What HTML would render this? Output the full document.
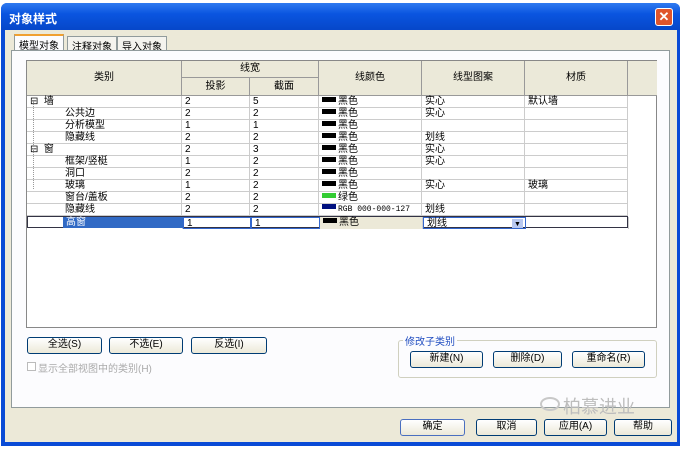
<!DOCTYPE html>
<html><head><meta charset="utf-8"><style>
*{margin:0;padding:0;box-sizing:border-box}
body{width:683px;height:450px;background:#fff;position:relative;overflow:hidden;font-family:"Liberation Sans","Noto Sans CJK SC",sans-serif;font-size:10px;color:#000}
.a{position:absolute}
.win{left:1px;top:3px;width:679px;height:443px;background:#0a4bd6;border-radius:6px 6px 0 0}
.title{left:1px;top:3px;width:679px;height:27px;background:linear-gradient(#2f7af0,#0a55e0 40%,#0647c9);border-radius:6px 6px 0 0;color:#fff;font-weight:bold;font-size:12px;padding:7px 8px}
.body{left:5px;top:30px;width:672px;height:412px;background:#ece9d8}
.close{left:655px;top:8px;width:18px;height:18px;background:#e0552c;border:1px solid #fff;border-radius:3px;color:#fff;font-size:13px;text-align:center;line-height:15px;font-weight:bold}
.tab{top:36px;height:15px;border:1px solid #919b9c;border-bottom:none;background:#f4f3ee;font-size:10px;padding:1px 4px}
.panel{left:11px;top:50px;width:659px;height:358px;background:#fcfcfe;border:1px solid #919b9c}
.grid{left:26px;top:60px;width:631px;height:268px;background:#fff;border:1px solid #888}
.hd{background:#ebe9d9;border-right:1px solid #999;border-bottom:1px solid #999;text-align:center;font-size:10px}
.row{position:absolute;left:0;height:12px;border-bottom:1px solid #ccc;width:601px}
.c{position:absolute;top:0;height:12px;border-right:1px solid #ccc;font-size:10px;line-height:11px;padding-left:3px;white-space:nowrap}
.sw{display:inline-block;width:14px;height:5px;background:#000;margin-right:2px;vertical-align:2px}
.btn{height:17px;border:1px solid #003c74;border-radius:3px;background:linear-gradient(#fff,#ece9d8);text-align:center;font-size:10px;line-height:14px}
</style></head><body>
<div class="a win"></div>
<div class="a title">对象样式</div>
<div class="a close">✕</div>
<div class="a body"></div>
<div class="a tab" style="left:14px;top:34px;height:17px;background:#fcfcfe;border-top:2px solid #f0a030">模型对象</div>
<div class="a tab" style="left:67px">注释对象</div>
<div class="a tab" style="left:117px">导入对象</div>
<div class="a panel"></div>
<div class="a grid">
 <div class="a hd" style="left:0;top:0;width:155px;height:35px;line-height:34px">类别</div>
 <div class="a hd" style="left:155px;top:0;width:137px;height:17px;line-height:16px">线宽</div>
 <div class="a hd" style="left:155px;top:17px;width:68px;height:18px;line-height:17px">投影</div>
 <div class="a hd" style="left:223px;top:17px;width:69px;height:18px;line-height:17px">截面</div>
 <div class="a hd" style="left:292px;top:0;width:103px;height:35px;line-height:34px">线颜色</div>
 <div class="a hd" style="left:395px;top:0;width:103px;height:35px;line-height:34px">线型图案</div>
 <div class="a hd" style="left:498px;top:0;width:103px;height:35px;line-height:34px">材质</div>
 <div class="a hd" style="left:601px;top:0;width:29px;height:35px;border-right:none"></div>
 <div class="a" style="left:0;top:35px;width:601px;height:132px">
 <div class="row" style="top:0"><div class="c" style="left:0;width:155px">⊟&nbsp;&nbsp;墙</div><div class="c" style="left:155px;width:68px">2</div><div class="c" style="left:223px;width:69px">5</div><div class="c" style="left:292px;width:103px"><span class="sw"></span>黑色</div><div class="c" style="left:395px;width:103px">实心</div><div class="c" style="left:498px;width:103px">默认墙</div></div>
 <div class="row" style="top:12px"><div class="c" style="left:0;width:155px;padding-left:38px">公共边</div><div class="c" style="left:155px;width:68px">2</div><div class="c" style="left:223px;width:69px">2</div><div class="c" style="left:292px;width:103px"><span class="sw"></span>黑色</div><div class="c" style="left:395px;width:103px">实心</div><div class="c" style="left:498px;width:103px"></div></div>
 <div class="row" style="top:24px"><div class="c" style="left:0;width:155px;padding-left:38px">分析模型</div><div class="c" style="left:155px;width:68px">1</div><div class="c" style="left:223px;width:69px">1</div><div class="c" style="left:292px;width:103px"><span class="sw"></span>黑色</div><div class="c" style="left:395px;width:103px"></div><div class="c" style="left:498px;width:103px"></div></div>
 <div class="row" style="top:36px"><div class="c" style="left:0;width:155px;padding-left:38px">隐藏线</div><div class="c" style="left:155px;width:68px">2</div><div class="c" style="left:223px;width:69px">2</div><div class="c" style="left:292px;width:103px"><span class="sw"></span>黑色</div><div class="c" style="left:395px;width:103px">划线</div><div class="c" style="left:498px;width:103px"></div></div>
 <div class="row" style="top:48px"><div class="c" style="left:0;width:155px">⊟&nbsp;&nbsp;窗</div><div class="c" style="left:155px;width:68px">2</div><div class="c" style="left:223px;width:69px">3</div><div class="c" style="left:292px;width:103px"><span class="sw"></span>黑色</div><div class="c" style="left:395px;width:103px">实心</div><div class="c" style="left:498px;width:103px"></div></div>
 <div class="row" style="top:60px"><div class="c" style="left:0;width:155px;padding-left:38px">框架/竖梃</div><div class="c" style="left:155px;width:68px">1</div><div class="c" style="left:223px;width:69px">2</div><div class="c" style="left:292px;width:103px"><span class="sw"></span>黑色</div><div class="c" style="left:395px;width:103px">实心</div><div class="c" style="left:498px;width:103px"></div></div>
 <div class="row" style="top:72px"><div class="c" style="left:0;width:155px;padding-left:38px">洞口</div><div class="c" style="left:155px;width:68px">2</div><div class="c" style="left:223px;width:69px">2</div><div class="c" style="left:292px;width:103px"><span class="sw"></span>黑色</div><div class="c" style="left:395px;width:103px"></div><div class="c" style="left:498px;width:103px"></div></div>
 <div class="row" style="top:84px"><div class="c" style="left:0;width:155px;padding-left:38px">玻璃</div><div class="c" style="left:155px;width:68px">1</div><div class="c" style="left:223px;width:69px">2</div><div class="c" style="left:292px;width:103px"><span class="sw"></span>黑色</div><div class="c" style="left:395px;width:103px">实心</div><div class="c" style="left:498px;width:103px">玻璃</div></div>
 <div class="row" style="top:96px"><div class="c" style="left:0;width:155px;padding-left:38px">窗台/盖板</div><div class="c" style="left:155px;width:68px">2</div><div class="c" style="left:223px;width:69px">2</div><div class="c" style="left:292px;width:103px"><span class="sw" style="background:#3c3"></span>绿色</div><div class="c" style="left:395px;width:103px"></div><div class="c" style="left:498px;width:103px"></div></div>
 <div class="row" style="top:108px"><div class="c" style="left:0;width:155px;padding-left:38px">隐藏线</div><div class="c" style="left:155px;width:68px">2</div><div class="c" style="left:223px;width:69px">2</div><div class="c" style="left:292px;width:103px;font-family:'Liberation Mono',monospace;font-size:8px"><span class="sw" style="background:#00107f"></span>RGB 000-000-127</div><div class="c" style="left:395px;width:103px">划线</div><div class="c" style="left:498px;width:103px"></div></div>
 <div class="row" style="top:120px;border:1px solid #334"><div class="c" style="left:0;width:155px;padding-left:0"><span style="margin-left:35px;background:#316ac5;color:#fff;display:inline-block;width:120px;padding-left:3px">高窗</span></div><div class="c" style="left:155px;width:68px;border:1px solid #36c">1</div><div class="c" style="left:223px;width:69px;border:1px solid #36c">1</div><div class="c" style="left:292px;width:103px;background:#ece9d8"><span class="sw"></span>黑色</div><div class="c" style="left:395px;width:103px;border:1px solid #36c">划线<span style="position:absolute;right:2px;top:1px;width:11px;height:9px;background:#b8c8f0;font-size:7px;text-align:center">▼</span></div><div class="c" style="left:498px;width:103px"></div></div>
 </div>
 <div class="a" style="left:6px;top:40px;width:1px;height:88px;border-left:1px dotted #999"></div>
</div>
<div class="a btn" style="left:27px;top:337px;width:75px">全选(S)</div>
<div class="a btn" style="left:109px;top:337px;width:74px">不选(E)</div>
<div class="a btn" style="left:191px;top:337px;width:76px">反选(I)</div>
<div class="a" style="left:27px;top:362px;width:9px;height:9px;border:1px solid #bbb;background:#fff"></div>
<div class="a" style="left:38px;top:360px;color:#aaa;font-size:10px">显示全部视图中的类别(H)</div>
<div class="a" style="left:398px;top:340px;width:259px;height:38px;border:1px solid #d0d0bf;border-radius:3px"></div>
<div class="a" style="left:403px;top:333px;background:#fcfcfe;color:#1f4cc0;font-size:10px;padding:0 2px">修改子类别</div>
<div class="a btn" style="left:410px;top:351px;width:73px">新建(N)</div>
<div class="a btn" style="left:493px;top:351px;width:69px">删除(D)</div>
<div class="a btn" style="left:572px;top:351px;width:73px">重命名(R)</div>
<div class="a" style="left:540px;top:397px;width:20px;height:14px;border:2px solid #c8c8c8;border-radius:50%"></div>
<div class="a" style="left:563px;top:393px;color:#bdbdbd;font-size:18px">柏慕进业</div>
<div class="a btn" style="left:400px;top:419px;width:65px;border-color:#4a6fc0">确定</div>
<div class="a btn" style="left:476px;top:419px;width:61px">取消</div>
<div class="a btn" style="left:544px;top:419px;width:63px">应用(A)</div>
<div class="a btn" style="left:614px;top:419px;width:58px">帮助</div>
</body></html>
